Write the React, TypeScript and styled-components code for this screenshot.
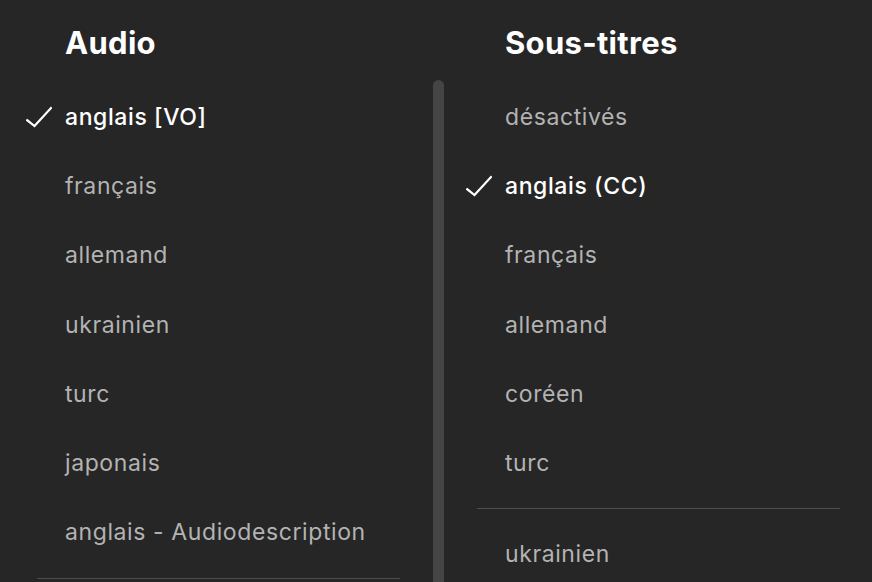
import React from 'react';
import styled, { createGlobalStyle } from 'styled-components';

const GlobalStyle = createGlobalStyle`
  html, body {
    margin: 0;
    padding: 0;
    background: #262626;
    overflow: hidden;
  }
  body {
    font-family: Inter, "Noto Sans", "Liberation Sans", sans-serif;
  }
`;

interface Track {
  label: string;
  selected?: boolean;
}

interface TrackGroup {
  tracks: Track[];
  divider?: boolean;
}

const audioGroups: TrackGroup[] = [
  {
    tracks: [
      { label: 'anglais [VO]', selected: true },
      { label: 'français' },
      { label: 'allemand' },
      { label: 'ukrainien' },
      { label: 'turc' },
      { label: 'japonais' },
      { label: 'anglais - Audiodescription' },
    ],
    divider: true,
  },
];

const subtitleGroups: TrackGroup[] = [
  {
    tracks: [
      { label: 'désactivés' },
      { label: 'anglais (CC)', selected: true },
      { label: 'français' },
      { label: 'allemand' },
      { label: 'coréen' },
      { label: 'turc' },
    ],
    divider: true,
  },
  {
    tracks: [{ label: 'ukrainien' }],
  },
];

const Menu = styled.div`
  display: grid;
  grid-template-columns: 440px 432px;
  width: 872px;
  height: 582px;
  overflow: hidden;
  background: #262626;
`;

const Column = styled.section`
  position: relative;
  display: flex;
  flex-direction: column;
  min-height: 0;
`;

const Title = styled.h2`
  flex: none;
  margin: 0;
  padding: 23px 0 0 65px;
  height: 82px;
  box-sizing: border-box;
  font-size: 31px;
  line-height: 40px;
  font-weight: 700;
  color: #fff;
  letter-spacing: 0.3px;
`;

const List = styled.ul`
  flex: none;
  list-style: none;
  margin: 0;
  padding: 0;
  display: flex;
  flex-direction: column;
`;

const Row = styled.li<{ $selected?: boolean }>`
  display: flex;
  align-items: center;
  flex: none;
  height: 69.3px;
  padding-left: 26px;
  font-size: 23px;
  letter-spacing: 0.6px;
  font-weight: ${(p) => (p.$selected ? 500 : 400)};
  color: ${(p) => (p.$selected ? '#fff' : '#b3b3b3')};
  white-space: nowrap;
`;

const CheckSlot = styled.span`
  display: flex;
  align-items: center;
  width: 39px;
  flex: none;
`;

const Divider = styled.li<{ $right: number }>`
  flex: none;
  height: 1px;
  margin: 10.5px ${(p) => p.$right}px 10.5px 37px;
  background: #4d4d4d;
`;

const ScrollThumb = styled.div`
  position: absolute;
  top: 80px;
  right: -4px;
  width: 11px;
  height: 540px;
  border-radius: 6px 6px 0 0;
  background: #454545;
`;

const Check = () => (
  <svg width="26" height="22" viewBox="0 0 26 22" fill="none">
    <path
      d="M1.2 14.2 L8.5 20 L25 2"
      stroke="#fff"
      strokeWidth="2.2"
      strokeLinecap="square"
      strokeLinejoin="miter"
    />
  </svg>
);

const TrackList: React.FC<{ groups: TrackGroup[]; dividerRight: number }> = ({ groups, dividerRight }) => (
  <List>
    {groups.map((group, gi) => (
      <React.Fragment key={gi}>
        {group.tracks.map((track) => (
          <Row key={track.label} $selected={track.selected}>
            <CheckSlot>{track.selected && <Check />}</CheckSlot>
            {track.label}
          </Row>
        ))}
        {group.divider && <Divider $right={dividerRight} />}
      </React.Fragment>
    ))}
  </List>
);

export default function App() {
  return (
    <>
      <GlobalStyle />
      <Menu>
        <Column>
          <Title>Audio</Title>
          <TrackList groups={audioGroups} dividerRight={40} />
          <ScrollThumb />
        </Column>
        <Column>
          <Title>Sous-titres</Title>
          <TrackList groups={subtitleGroups} dividerRight={32} />
        </Column>
      </Menu>
    </>
  );
}
